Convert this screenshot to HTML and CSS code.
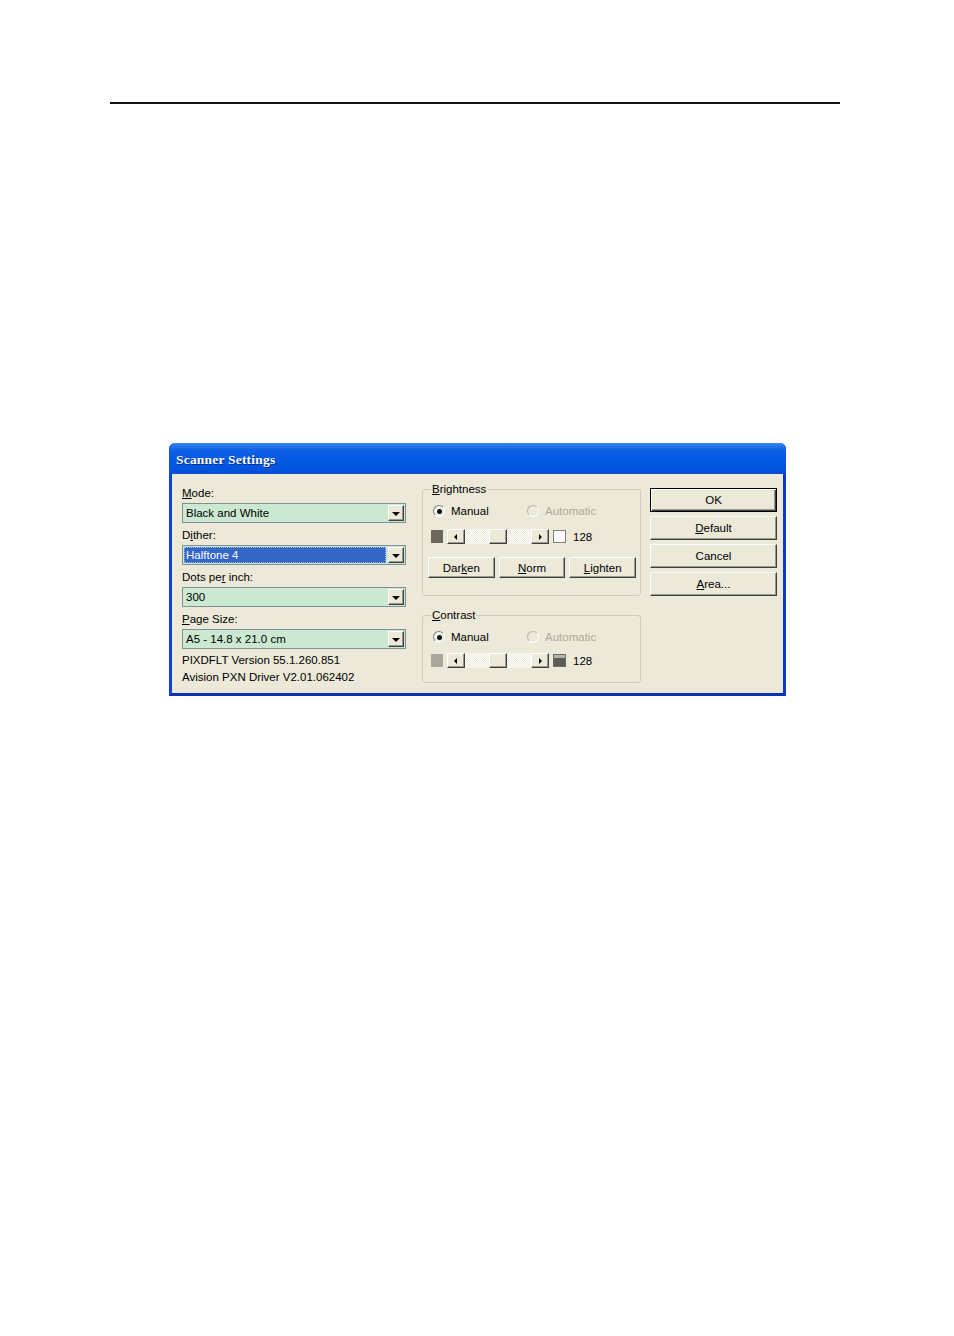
FILE: index.html
```html
<!DOCTYPE html>
<html>
<head>
<meta charset="utf-8">
<link rel="stylesheet" href="styles.css">
</head>
<body>
<div class="page">
  <div class="rule"></div>
  <div class="dialog">
    <div class="titlebar"><span class="title">Scanner Settings</span></div>
    <div class="body">
      <div class="col-left">
        <div class="label"><u>M</u>ode:</div>
        <div class="combo"><span class="value">Black and White</span><span class="drop"><i class="tri"></i></span></div>
        <div class="label">D<u>i</u>ther:</div>
        <div class="combo"><span class="value selected">Halftone 4</span><span class="drop"><i class="tri"></i></span></div>
        <div class="label">Dots pe<u>r</u> inch:</div>
        <div class="combo"><span class="value">300</span><span class="drop"><i class="tri"></i></span></div>
        <div class="label"><u>P</u>age Size:</div>
        <div class="combo"><span class="value">A5 - 14.8 x 21.0 cm</span><span class="drop"><i class="tri"></i></span></div>
        <div class="info first">PIXDFLT Version 55.1.260.851</div>
        <div class="info">Avision PXN Driver V2.01.062402</div>
      </div>
      <div class="col-mid">
        <fieldset class="group bright">
          <legend><u>B</u>rightness</legend>
          <div class="radios">
            <span class="radio-item"><i class="radio on"></i><span>Manual</span></span>
            <span class="radio-item disabled"><i class="radio off"></i><span>Automatic</span></span>
          </div>
          <div class="slider">
            <i class="swatch dark"></i>
            <div class="scroll">
              <span class="sbtn"><i class="arr left"></i></span>
              <span class="track"><span class="thumb"></span></span>
              <span class="sbtn"><i class="arr right"></i></span>
            </div>
            <i class="swatch white"></i>
            <span class="num">128</span>
          </div>
          <div class="btnrow">
            <button class="btn small">Dar<u>k</u>en</button>
            <button class="btn small"><u>N</u>orm</button>
            <button class="btn small"><u>L</u>ighten</button>
          </div>
        </fieldset>
        <fieldset class="group contrast">
          <legend><u>C</u>ontrast</legend>
          <div class="radios">
            <span class="radio-item"><i class="radio on"></i><span>Manual</span></span>
            <span class="radio-item disabled"><i class="radio off"></i><span>Automatic</span></span>
          </div>
          <div class="slider">
            <i class="swatch light"></i>
            <div class="scroll">
              <span class="sbtn"><i class="arr left"></i></span>
              <span class="track"><span class="thumb"></span></span>
              <span class="sbtn"><i class="arr right"></i></span>
            </div>
            <i class="swatch grad"></i>
            <span class="num">128</span>
          </div>
        </fieldset>
      </div>
      <div class="col-right">
        <button class="btn big default">OK</button>
        <button class="btn big"><u>D</u>efault</button>
        <button class="btn big">Cancel</button>
        <button class="btn big"><u>A</u>rea...</button>
      </div>
    </div>
  </div>
</div>
</body>
</html>
```
FILE: styles.css
```css
html, body {
  margin: 0;
  padding: 0;
  background: #fff;
}
.page {
  width: 954px;
  height: 1336px;
  overflow: hidden;
  font-family: "Liberation Sans", Arial, sans-serif;
  font-size: 11.5px;
  color: #000;
}
.rule {
  margin: 102px 0 0 110px;
  width: 730px;
  height: 2px;
  background: #111;
}
.dialog {
  margin: 339px 0 0 169px;
  width: 611px;
  border: 3px solid #0842D6;
  border-top: 0;
  border-radius: 6px 6px 0 0;
  background: #ECE9D8;
  border-left-color: #0B45D8;
  border-right-color: #0A3CC8;
  border-bottom-color: #0A32B8;
}
.titlebar {
  margin: 0 -3px;
  height: 31px;
  border-radius: 6px 6px 0 0;
  background: linear-gradient(to bottom, #3A86F2 0%, #2A78F0 8%, #0F62E6 22%, #0058E4 55%, #0254E0 85%, #0A4BD0 100%);
  display: flex;
  align-items: center;
  padding-left: 7px;
  box-sizing: border-box;
}
.title {
  font-family: "Liberation Serif", "Times New Roman", serif;
  font-weight: bold;
  font-size: 13.5px;
  color: #fff;
  text-shadow: 1px 1px 0 #0a2a80;
  letter-spacing: 0.2px;
  margin-top: 3px;
}
.body {
  display: flex;
  align-items: flex-start;
  height: 219px;
}
.col-left {
  margin: 13px 0 0 10px;
  width: 224px;
  display: flex;
  flex-direction: column;
}
.label {
  height: 13px;
  line-height: 13px;
  margin-top: 6px;
}
.label:first-child {
  margin-top: 0;
}
.combo {
  margin-top: 3px;
  height: 20px;
  box-sizing: border-box;
  border: 1px solid #7F8F9A;
  background: #CBE9D1;
  display: flex;
  align-items: stretch;
  padding: 1px;
}
.value {
  flex: 1;
  line-height: 16px;
  padding-left: 2px;
  margin-right: 2px;
}
.value.selected {
  background: #3466C6;
  color: #fff;
  outline: 1px dotted #a0b8e8;
  outline-offset: -1px;
}
.drop {
  width: 16px;
  box-sizing: border-box;
  background: #ECE9D8;
  border: 1px solid;
  border-color: #fff #404040 #404040 #fff;
  box-shadow: inset -1px -1px 0 #9a9890;
  display: flex;
  align-items: center;
  justify-content: center;
}
.tri {
  width: 0;
  height: 0;
  border-left: 4px solid transparent;
  border-right: 4px solid transparent;
  border-top: 4px solid #000;
  margin-top: 1px;
}
.info {
  height: 17px;
  line-height: 17px;
}
.info.first {
  margin-top: 3px;
}
.col-mid {
  margin: 8px 0 0 16px;
  width: 219px;
  display: flex;
  flex-direction: column;
}
.group {
  margin: 0;
  border: 1px solid #CFCCBC;
  border-radius: 3px;
  padding: 0 4px 17px 5px;
  min-width: 0;
}
.group.contrast {
  margin-top: 12px;
  padding-bottom: 14px;
}
.group legend {
  padding: 0 1px;
  margin-left: 3px;
  height: 14px;
  line-height: 14px;
}
.radios {
  margin: 8px 0 0 5px;
  height: 14px;
  display: flex;
  align-items: center;
}
.radio-item {
  display: flex;
  align-items: center;
  gap: 6px;
}
.radio-item:first-child {
  width: 94px;
}
.radio-item.disabled {
  color: #ACA899;
}
.radio {
  width: 12px;
  height: 12px;
  box-sizing: border-box;
  border-radius: 50%;
  border: 1px solid;
  border-color: #808080 #fff #fff #808080;
  background: radial-gradient(circle at 40% 40%, #fff 0%, #e4eee4 60%, #cfd6cc 100%);
  display: flex;
  align-items: center;
  justify-content: center;
}
.radio.on::after {
  content: "";
  width: 5px;
  height: 5px;
  border-radius: 50%;
  background: #111;
}
.radio.off {
  background: #ECE9D8;
  border-color: #b8b5a6 #fff #fff #b8b5a6;
}
.slider {
  margin: 11px 0 0 3px;
  height: 15px;
  display: flex;
  align-items: center;
}
.group.contrast .slider {
  margin-top: 9px;
}
.swatch {
  width: 12px;
  height: 13px;
  box-sizing: border-box;
}
.swatch.dark {
  background: #6B675F;
}
.swatch.light {
  background: #A9A69C;
}
.swatch.white {
  width: 13px;
  background: #fff;
  border: 1px solid #808080;
}
.swatch.grad {
  width: 13px;
  border: 1px solid #6a6a66;
  background: linear-gradient(to bottom, #b4b2aa 0%, #b4b2aa 28%, #5d5c58 30%, #5d5c58 100%);
}
.scroll {
  margin: 0 4px;
  width: 102px;
  height: 15px;
  display: flex;
}
.sbtn, .thumb {
  width: 18px;
  height: 15px;
  box-sizing: border-box;
  background: #ECE9D8;
  border: 1px solid;
  border-color: #fff #404040 #404040 #fff;
  box-shadow: inset -1px -1px 0 #9a9890;
  display: flex;
  align-items: center;
  justify-content: center;
}
.track {
  flex: 1;
  height: 15px;
  background: repeating-conic-gradient(#ffffff 0 25%, #ECE9D8 0 50%) 0 0 / 2px 2px;
  display: flex;
  justify-content: center;
}
.arr {
  width: 0;
  height: 0;
  border-top: 3px solid transparent;
  border-bottom: 3px solid transparent;
}
.arr.left {
  border-right: 3px solid #000;
  margin-right: 1px;
}
.arr.right {
  border-left: 3px solid #000;
  margin-left: 1px;
}
.num {
  margin-left: 7px;
}
.btnrow {
  margin-top: 13px;
  display: flex;
  gap: 4px;
}
.btn {
  font-family: "Liberation Sans", Arial, sans-serif;
  font-size: 11.5px;
  color: #000;
  background: #ECE9D8;
  border: 1px solid;
  border-color: #fff #404040 #404040 #fff;
  box-shadow: inset -1px -1px 0 #9a9890;
  padding: 0;
  margin: 0;
  box-sizing: border-box;
}
.btn.small {
  width: 67px;
  height: 21px;
}
.col-right {
  margin: 14px 0 0 9px;
  width: 127px;
  display: flex;
  flex-direction: column;
  gap: 4px;
}
.btn.big {
  width: 127px;
  height: 24px;
}
.btn.default {
  border: 1px solid #000;
  box-shadow: inset 1px 1px 0 #fff, inset -1px -1px 0 #404040, inset -2px -2px 0 #9a9890;
}
u {
  text-decoration: underline;
  text-underline-offset: 1px;
}
```
